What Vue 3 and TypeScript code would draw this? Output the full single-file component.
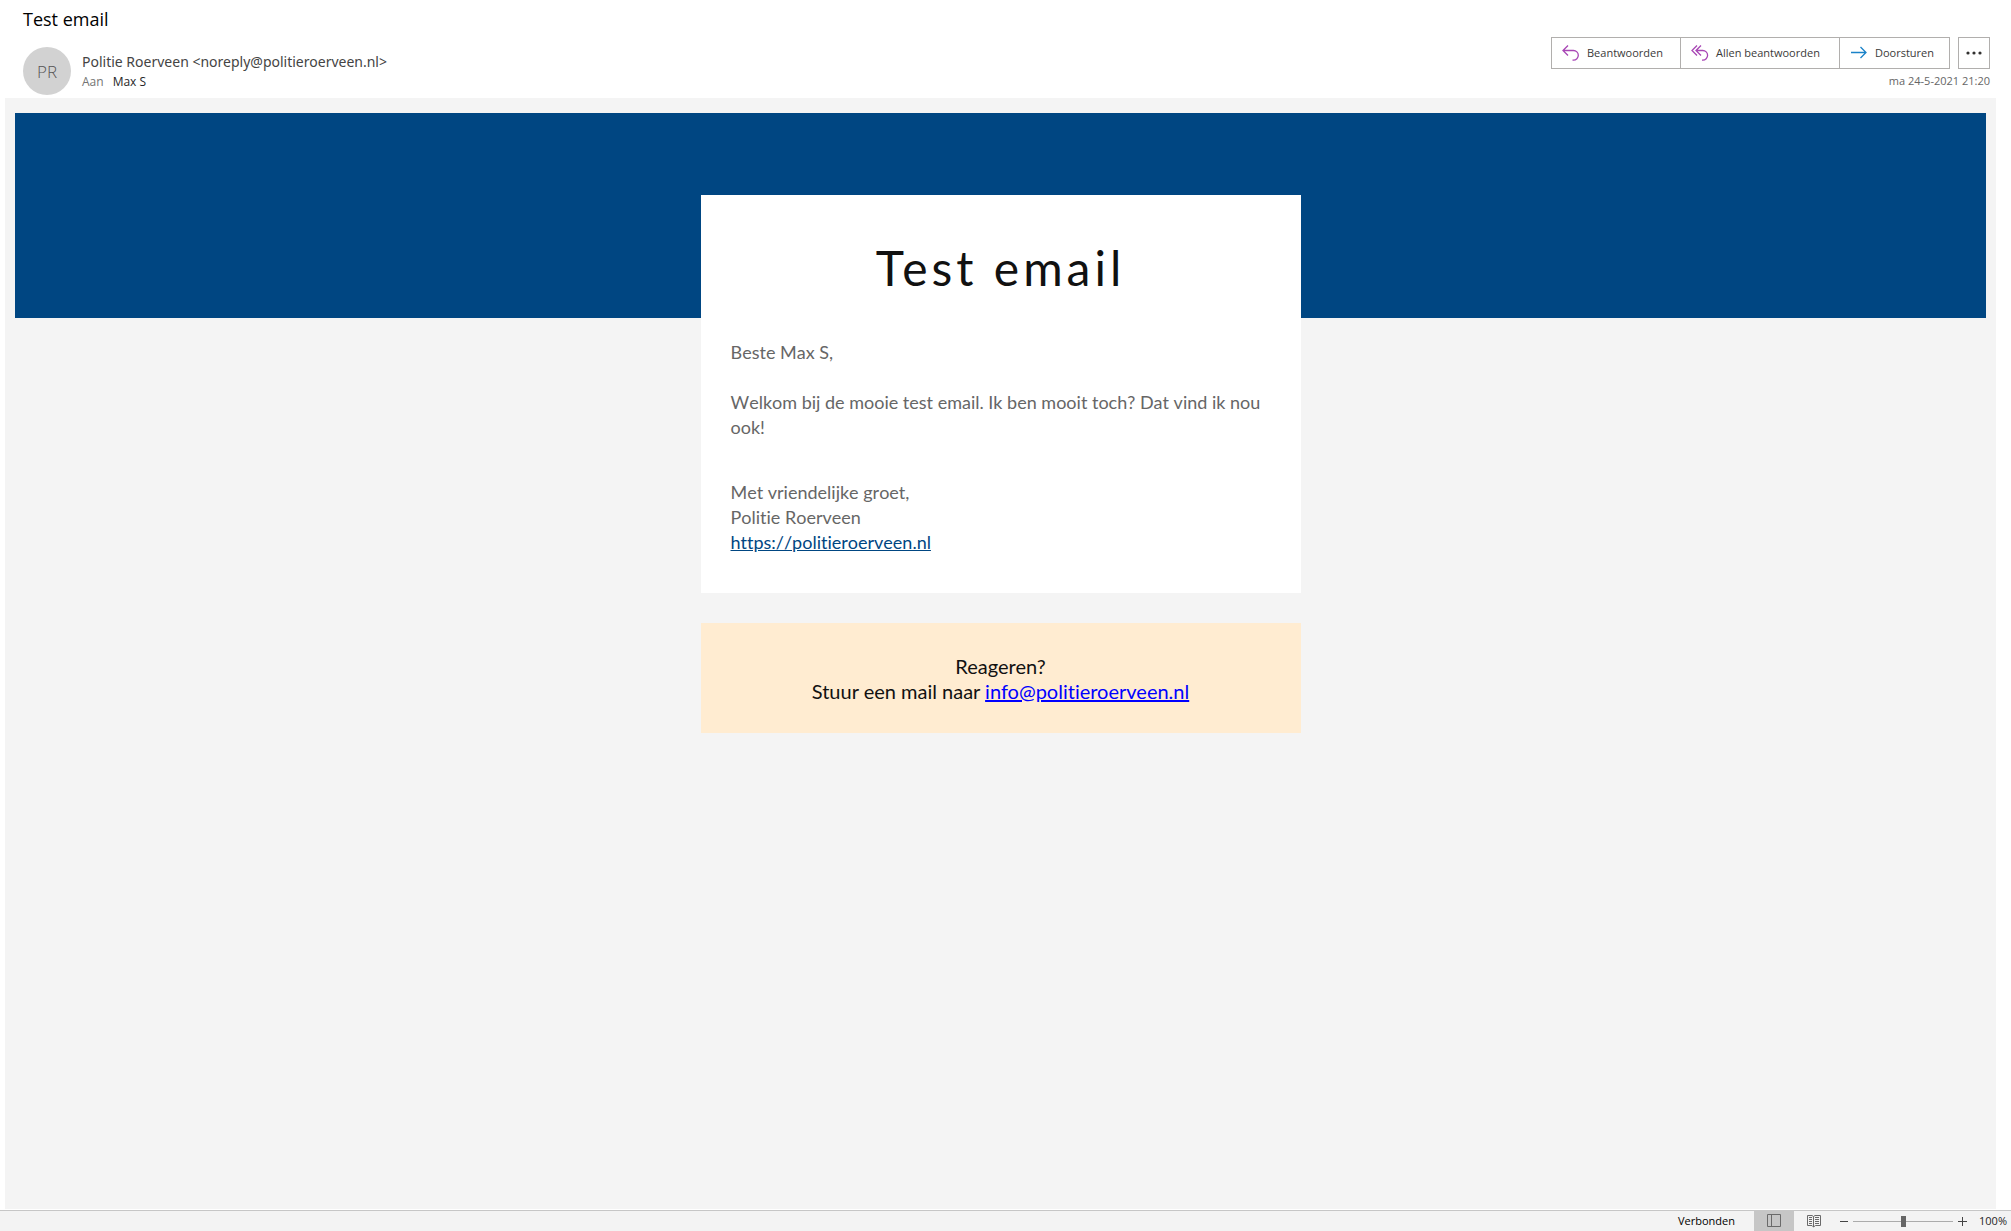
<script setup lang="ts">
import { ref } from 'vue'

const zoom = ref<number>(50)
const siteUrl = 'https://politieroerveen.nl'
const contact = 'info@politieroerveen.nl'
</script>

<template>
  <div class="window">
    <header class="message-header">
      <h1 class="subject">Test email</h1>
      <div class="meta">
        <div class="avatar" aria-hidden="true">PR</div>
        <div class="people">
          <div class="sender">Politie Roerveen &lt;noreply@politieroerveen.nl&gt;</div>
          <div class="recipient"><span class="label">Aan</span><span>Max S</span></div>
        </div>
        <div class="side">
          <div class="actions">
            <div class="group">
              <button type="button" class="action reply">
                <svg width="18" height="18" viewBox="0 0 18 18" class="purple">
                  <path d="M6 1.5 1 6.5l5 5M1.500 6.500h10a4.800 4.800 0 0 1 0 9.600h-1" />
                </svg>
                <span class="caption">Beantwoorden</span>
              </button>
              <button type="button" class="action reply-all">
                <svg width="18" height="18" viewBox="0 0 18 18" class="purple">
                  <path d="M6 1.500 1 6.500l5 5M10 1.500 5 6.500l5 5M5.500 6.500h6.300a4.800 4.800 0 0 1 0 9.600h-.800" />
                </svg>
                <span class="caption">Allen beantwoorden</span>
              </button>
              <button type="button" class="action forward">
                <svg width="18" height="18" viewBox="0 0 18 18" class="blue">
                  <path d="M1 8.500h15M10.500 3 16 8.500 10.500 14" />
                </svg>
                <span class="caption">Doorsturen</span>
              </button>
            </div>
            <button type="button" class="more" aria-label="Meer acties">
              <svg width="16" height="4" viewBox="0 0 16 4">
                <circle cx="2" cy="2" r="1.600" /><circle cx="8" cy="2" r="1.600" /><circle cx="14" cy="2" r="1.600" />
              </svg>
            </button>
          </div>
          <time class="date" datetime="2021-05-24T21:20">ma 24-5-2021 21:20</time>
        </div>
      </div>
    </header>

    <main class="mail">
      <div class="banner"></div>
      <article class="card">
        <h2 class="card-title">Test email</h2>
        <p>Beste Max S,</p>
        <p>Welkom bij de mooie test email. Ik ben mooit toch? Dat vind ik nou ook!</p>
        <p class="closing">
          Met vriendelijke groet,<br />Politie Roerveen<br /><a :href="siteUrl">{{ siteUrl }}</a>
        </p>
      </article>
      <section class="contact">
        Reageren?<br />Stuur een mail naar <a :href="`mailto:${contact}`">{{ contact }}</a>
      </section>
    </main>

    <footer class="status">
      <span class="connection">Verbonden</span>
      <button type="button" class="view active" aria-label="Normale weergave">
        <svg width="14" height="14" viewBox="0 0 14 14">
          <path d="M.5.500h13v12H.500zM4.500.500v12" />
        </svg>
      </button>
      <button type="button" class="view" aria-label="Leesweergave">
        <svg width="14" height="14" viewBox="0 0 14 14">
          <path d="M.5 1.500H5L6.500 2.500 8 1.500h5.500v10H8.500L6.500 13 5 11.500H.500zM6.500 2.500V13M2 3.500h3M2 5.500h3M2 7.500h3M2 9.500h3M8 3.500h4M8 5.500h4M8 7.500h4M8 9.500h4" />
        </svg>
      </button>
      <button type="button" class="step minus" aria-label="Uitzoomen">
        <svg width="9" height="9" viewBox="0 0 9 9"><path d="M0 4.500h8" /></svg>
      </button>
      <input v-model.number="zoom" class="slider" type="range" min="0" max="100" aria-label="Zoom" />
      <button type="button" class="step" aria-label="Inzoomen">
        <svg width="9" height="9" viewBox="0 0 9 9"><path d="M0 4.500h9M4.500 0v9" /></svg>
      </button>
      <span class="percent">100%</span>
    </footer>
  </div>
</template>

<style>
body {
  margin: 0;
  background: #fff;
}
</style>

<style scoped>
.window {
  display: flex;
  flex-direction: column;
  min-height: 100vh;
  font-family: 'Open Sans', 'Noto Sans', sans-serif;
  color: #262626;
}
h1, h2, p { margin: 0; font-weight: 400; }
button {
  margin: 0;
  padding: 0;
  border: 0;
  background: none;
  font: inherit;
  color: inherit;
}
svg { display: block; fill: none; flex: none; }

.message-header {
  box-sizing: border-box;
  height: 98px;
  padding: 7px 21px 0 23px;
}
.subject {
  height: 30px;
  font-size: 18px;
  line-height: 24px;
  color: #000;
}
.meta { display: flex; }
.avatar {
  width: 48px;
  height: 48px;
  margin: 10px 11px 0 0;
  border-radius: 50%;
  background: #d2d2d2;
  color: #555;
  font-size: 17px;
  font-weight: 300;
  line-height: 50px;
  text-align: center;
}
.people { flex: 1; padding-top: 14px; }
.sender {
  font-family: 'Noto Sans', sans-serif;
  font-size: 14px;
  line-height: 22px;
  color: #444;
}
.recipient { display: flex; gap: 9px; font-size: 12px; line-height: 18px; }
.label { color: #737373; }
.side {
  display: flex;
  flex-direction: column;
  align-items: flex-end;
}
.actions { display: flex; gap: 8px; }
.group { display: flex; border: 1px solid #b1afad; }
.action {
  display: flex;
  align-items: center;
  gap: 7px;
  height: 30px;
  padding-left: 10px;
  box-sizing: border-box;
  font-size: 11px;
  white-space: nowrap;
  color: #3b3a39;
}
.action + .action { border-left: 1px solid #b1afad; }
.caption { padding-bottom: 2px; }
.reply { width: 128px; }
.reply-all { width: 159px; }
.forward { width: 110px; }
.purple { stroke: #a846b5; stroke-width: 1.3; }
.blue { stroke: #1a82c8; stroke-width: 1.3; }
.more {
  display: flex;
  align-items: center;
  justify-content: center;
  box-sizing: border-box;
  width: 32px;
  height: 32px;
  border: 1px solid #b1afad;
}
.more svg { fill: #323130; }
.date { margin-top: 3px; font-size: 11px; line-height: 18px; color: #666; }

.mail {
  flex: 1;
  display: flex;
  flex-direction: column;
  align-items: center;
  margin: 0 15px 1px 5px;
  padding: 15px 10px;
  background: #f4f4f4;
  font-family: Lato, sans-serif;
  font-variant-ligatures: none;
}
.banner { align-self: stretch; height: 205px; background: #004682; }
.card {
  box-sizing: border-box;
  width: 600px;
  margin-top: -123px;
  padding: 49px 30px 38px;
  background: #fff;
  font-size: 18px;
  line-height: 25px;
  color: #666;
}
.card-title {
  margin-bottom: 48px;
  font-size: 48px;
  line-height: 48px;
  letter-spacing: 4px;
  text-align: center;
  color: #111;
}
.card p { font-kerning: none; }
.card p + p { margin-top: 25px; }
.card p.closing { margin-top: 40px; }
.card a { color: #004682; }
.contact {
  box-sizing: border-box;
  width: 600px;
  margin-top: 30px;
  padding: 31px 30px 29px;
  background: #ffecd1;
  font-size: 20px;
  line-height: 25px;
  text-align: center;
  color: #111;
}
.contact a { color: #00f; }

.status {
  display: flex;
  align-items: center;
  height: 20px;
  padding-right: 4px;
  border-top: 1px solid #c6c6c6;
  background: #f3f3f3;
  justify-content: flex-end;
  font-size: 11px;
  line-height: 20px;
}
.connection { margin-right: 19px; line-height: 22px; color: #000; }
.view {
  display: flex;
  align-items: center;
  justify-content: center;
  width: 40px;
  height: 20px;
}
.view svg { stroke: #6a6a6a; }
.active { background: #c6c6c6; }
.step svg { stroke: #444; }
.minus { margin-left: 6px; }
.slider {
  appearance: none;
  width: 100px;
  height: 12px;
  margin: 0 5px 0 4px;
  background: linear-gradient(#ababab, #ababab) center / 100% 1px no-repeat;
}
.slider::-webkit-slider-thumb {
  appearance: none;
  width: 5px;
  height: 11px;
  background: #666;
}
.percent { margin-left: 12px; }
</style>
